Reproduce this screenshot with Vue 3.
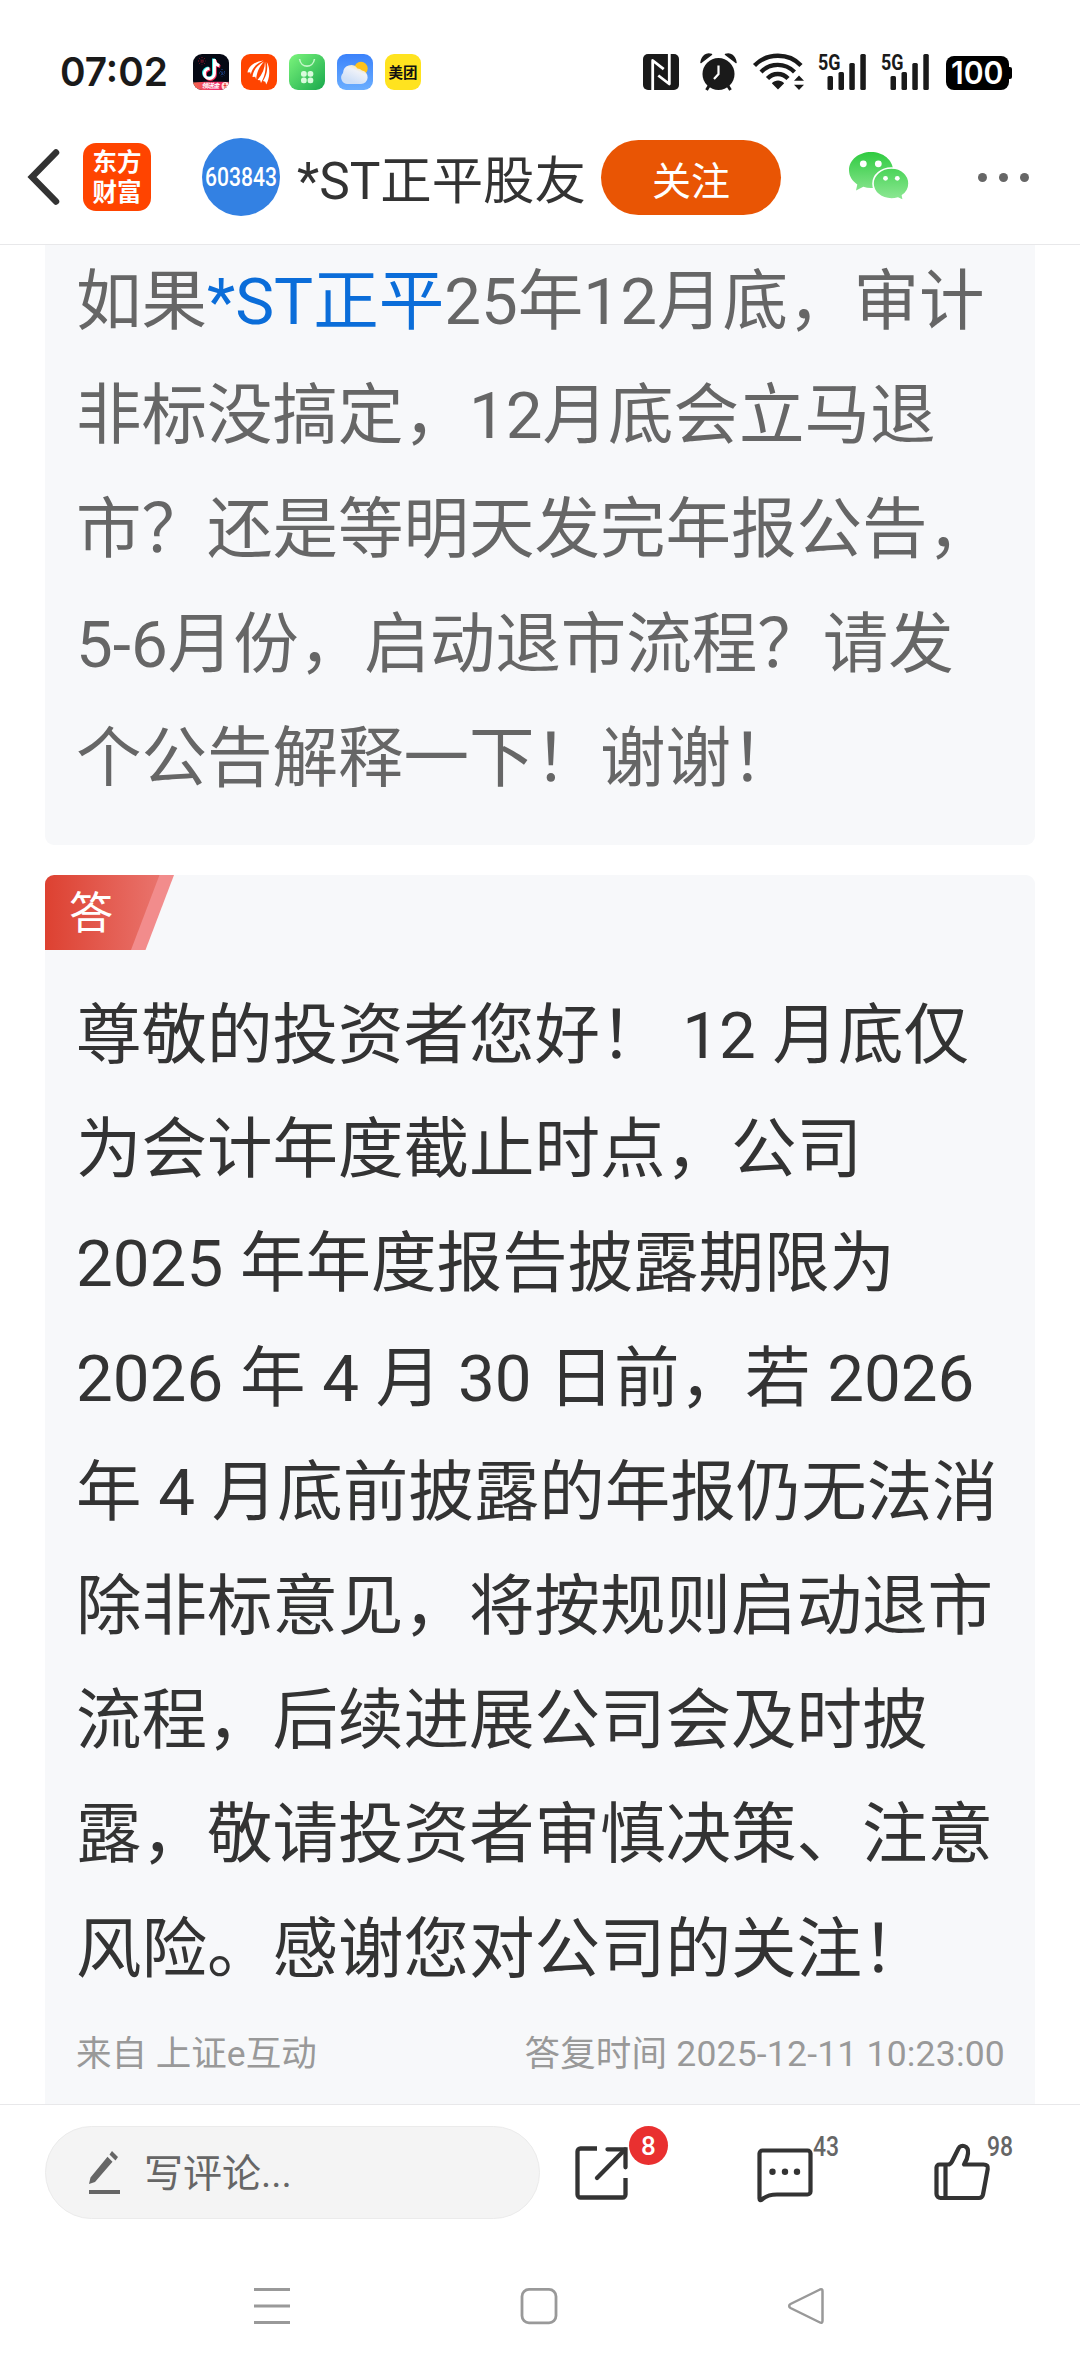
<template>
  <div class="page">
    <div class="status-bar">
      <svg class="clock" width="108" height="40" viewBox="0 0 108 40">
        <text x="0" y="34.5" textLength="108" lengthAdjust="spacingAndGlyphs">07:02</text>
      </svg>

      <div class="app-icons">
        <svg width="36" height="36" viewBox="0 0 36 36">
          <defs>
            <clipPath id="tile"><rect width="36" height="36" rx="9" /></clipPath>
            <linearGradient id="promo" x1="0" x2="1">
              <stop offset="0" stop-color="#f4694f" />
              <stop offset="0.6" stop-color="#ee2a6c" />
              <stop offset="1" stop-color="#f0355c" />
            </linearGradient>
          </defs>
          <g clip-path="url(#tile)">
            <rect width="36" height="36" fill="#060914" />
            <g fill="none" stroke-width="3">
              <path d="M20.500 4.500v14.500a5 5 0 1 1-5-5M20.500 5.500c.5 3.500 2.500 5 5 5.500" stroke="#25e8e4" />
              <path d="M22.300 6v14.500a5 5 0 1 1-5-5M22.300 7c.5 3.500 2.500 5 5 5.500" stroke="#f32b56" />
              <path d="M21.400 5v14.500a5 5 0 1 1-5-5M21.400 6c.5 3.500 2.500 5 5 5.500" stroke="#fff" />
            </g>
            <g stroke-width="1" stroke-dasharray="1 1.500">
              <path d="M5 7h8M9 3v8M6 4l6 6M12 4l-6 6" stroke="#8c1a2c" />
              <path d="M26 19h7M29 15v8M27 17l5 5M32 17l-5 5" stroke="#1f4b9c" />
            </g>
            <path d="M0 28.500c8-1 22-1 36-.5v8H0z" fill="url(#promo)" />
            <circle cx="32.500" cy="32" r="4" fill="#ffe3dc" />
            <path d="M32 29v5M30.500 31.500h3" stroke="#e8352f" />
            <text class="promo" x="8.500" y="34.200" textLength="18">领送金</text>
          </g>
        </svg>
        <svg width="36" height="36" viewBox="0 0 36 36">
          <rect width="36" height="36" rx="9" fill="#ff4400" />
          <g fill="#fff">
            <path d="M22.500 6.500C15 7.500 7.500 11 6.500 18.500l2.700-.2.600 2.200C11 14 15.500 9.500 22.500 6.500z" />
            <path d="M23 7.500C16.500 11 12 16 11.500 23l2.700-.3 1 2.800C15.500 18.500 18.500 12.500 23 7.500z" />
            <path d="M24 7.500C24 14 21.500 20 16.500 26l2.700.2.800 2.800C24 22 25.500 14.500 24 7.500z" />
            <path d="M25.800 8c1.200 7 0 13-3.800 19l2.300.7.900 2.800C29 24 29.500 14.500 25.800 8z" />
          </g>
        </svg>
        <svg width="36" height="36" viewBox="0 0 36 36">
          <defs>
            <linearGradient id="bag" x1="0" y1="0" x2="1" y2="1">
              <stop offset="0" stop-color="#7cf57c" />
              <stop offset="1" stop-color="#18a84c" />
            </linearGradient>
          </defs>
          <rect width="36" height="36" rx="9" fill="url(#bag)" />
          <path d="M10.500 5c1.500 9.500 13.500 9.500 15 0" fill="none" stroke="#c3f7c8" stroke-width="1.600" />
          <g fill="#d9fbdd">
            <rect x="12" y="17" width="5.700" height="5.700" rx="2.500" />
            <rect x="18.600" y="17" width="5.700" height="5.700" rx="2.500" />
            <rect x="12" y="23.600" width="5.700" height="5.700" rx="2.500" />
            <rect x="18.600" y="23.600" width="5.700" height="5.700" rx="2.500" />
          </g>
        </svg>
        <svg width="36" height="36" viewBox="0 0 36 36">
          <defs>
            <linearGradient id="sky" x1="0" y1="0" x2="0" y2="1">
              <stop offset="0" stop-color="#3b82fb" />
              <stop offset="1" stop-color="#6aaeff" />
            </linearGradient>
            <linearGradient id="cloud" x1="0.800" y1="0" x2="0.300" y2="0.800">
              <stop offset="0" stop-color="#ffe08a" />
              <stop offset="0.400" stop-color="#eef1f8" />
              <stop offset="1" stop-color="#cfe0f7" />
            </linearGradient>
          </defs>
          <rect width="36" height="36" rx="9" fill="url(#sky)" />
          <circle cx="24" cy="14.500" r="6.700" fill="#ffc21c" />
          <path d="M11 30a6.500 6.500 0 0 1-5-11 8 8 0 0 1 14.500-4.500 7 7 0 0 1 4.500 2A6.800 6.800 0 0 1 24 30z" fill="url(#cloud)" />
        </svg>
        <svg width="36" height="36" viewBox="0 0 36 36">
          <rect width="36" height="36" rx="9" fill="#ffe31f" />
          <text class="meituan" x="3.500" y="23.500" textLength="29">美团</text>
        </svg>
      </div>

      <div class="system-icons">
        <svg class="nfc" width="36" height="36" viewBox="0 0 36 36">
          <rect width="36" height="36" rx="5" fill="#1a1a1a" />
          <path d="M9.700 36V6.500l11 8.700M26.300 0v30l-11-8.500" fill="none" stroke="#fff" stroke-width="2.800" stroke-linejoin="round" />
        </svg>
        <svg class="alarm" width="38" height="38" viewBox="0 0 38 38" fill="#1a1a1a">
          <circle cx="18.500" cy="21" r="16" />
          <path d="M1 9.500C2 3 6.500-.5 11.500 1.500zM36 9.500C35 3 30.500-.5 25.500 1.500z" stroke="#1a1a1a" stroke-width="1.500" stroke-linejoin="round" />
          <path d="M9 33l-2.500 4M28 33l2.500 4" stroke="#1a1a1a" stroke-width="3" />
          <path d="M18.500 12.500v8.500l-4.500 5" fill="none" stroke="#fff" stroke-width="2.200" />
        </svg>
        <svg class="wifi" width="52" height="38" viewBox="0 0 52 38">
          <g fill="none" stroke="#1a1a1a" stroke-width="4.300">
            <path d="M1.500 12.500C14-.5 36-.5 48 12.500" />
            <path d="M8 19c9.500-9.500 24-9.500 33.500 0" />
            <path d="M14.500 25.500c5.500-6 15-6 20.500 0" />
          </g>
          <path d="M25 36.500l-6.200-6.300c3.500-3.600 9-3.600 12.400 0zM46 37l-5-5.300h10zM46 22.500l-5 5.300h10z" fill="#1a1a1a" />
        </svg>
        <svg v-for="n in 2" :key="n" class="signal" width="48" height="38" viewBox="0 0 48 38">
          <text x="0" y="16.500" textLength="22.500" lengthAdjust="spacingAndGlyphs">5G</text>
          <g fill="#1a1a1a">
            <rect x="9.500" y="23" width="5.500" height="14" rx="1.500" />
            <rect x="20.500" y="19" width="5.500" height="18" rx="1.500" />
            <rect x="31.300" y="10" width="5.500" height="27" rx="1.500" />
            <rect x="42.300" y="1" width="5.500" height="36" rx="1.500" />
          </g>
        </svg>
        <svg class="battery" width="67" height="34" viewBox="0 0 67 34">
          <rect width="63" height="34" rx="8" />
          <rect x="60" y="11" width="6" height="12" rx="2" />
          <text x="5" y="28" textLength="52.500" lengthAdjust="spacingAndGlyphs">100</text>
        </svg>
      </div>
    </div>

    <header class="header">
      <svg class="back" width="34" height="60" viewBox="0 0 34 60">
        <path d="M29 5.500L5 30l24 24.500" fill="none" stroke="#333" stroke-width="6.500" stroke-linecap="round" />
      </svg>
      <div class="brand">
        <span>东方</span>
        <span>财富</span>
      </div>
      <svg class="avatar" width="78" height="78" viewBox="0 0 78 78">
        <circle cx="39" cy="39" r="39" fill="#3381e3" />
        <text x="3" y="47.500" textLength="72" lengthAdjust="spacingAndGlyphs">603843</text>
      </svg>
      <div class="title">*ST正平股友</div>
      <button class="follow">关注</button>
      <svg class="wechat" width="62" height="50" viewBox="0 0 62 50">
        <defs>
          <linearGradient id="wx1" x1="0" y1="0" x2="0" y2="1">
            <stop offset="0" stop-color="#2fcb40" />
            <stop offset="1" stop-color="#84e38b" />
          </linearGradient>
          <linearGradient id="wx2" x1="0" y1="0" x2="0" y2="1">
            <stop offset="0" stop-color="#4ad458" />
            <stop offset="1" stop-color="#90e896" />
          </linearGradient>
        </defs>
        <path d="M22 0C9.800 0 0 8 0 18.300c0 5.700 3.200 10.700 8.300 14.100L7 38.500l7.300-3.700c2.500.8 5 1.200 7.700 1.200 12.200 0 22-7.800 22-17.800S34.200 0 22 0z" fill="url(#wx1)" />
        <path d="M42.500 16C32 16 24 23 24 31.500S32 47 42.500 47c2.300 0 4.500-.4 6.500-1l5.500 2.700-1-5.200c4-2.800 6.500-7.100 6.500-12C60 23 53 16 42.500 16z" fill="url(#wx2)" stroke="#fff" stroke-width="1.600" />
        <g fill="#fff">
          <circle cx="14.300" cy="11.800" r="3.400" />
          <circle cx="29.300" cy="11.800" r="3.400" />
          <circle cx="36.500" cy="26.300" r="2.400" />
          <circle cx="48.300" cy="26.300" r="2.400" />
        </g>
      </svg>
      <div class="more"><i></i><i></i><i></i></div>
    </header>

    <main class="content">
      <section class="card question">
        <p class="line">如果<a class="stock">*ST正平</a>25年12月底，审计</p>
        <p v-for="line in questionLines" :key="line" class="line">{{ line }}</p>
      </section>

      <section class="card answer">
        <svg class="tag" width="130" height="75" viewBox="0 0 130 75">
          <defs>
            <linearGradient id="tag" x1="0" x2="1">
              <stop offset="0" stop-color="#dd4131" />
              <stop offset="1" stop-color="#e9736c" />
            </linearGradient>
          </defs>
          <path d="M100 0h29l-28.500 75H80z" fill="#f28c8c" />
          <path d="M9 0h105.500L86 75H0V9a9 9 0 0 1 9-9z" fill="url(#tag)" />
          <text x="24" y="53.500">答</text>
        </svg>
        <div class="answer-text">
          <p v-for="line in answerLines" :key="line" class="line">{{ line }}</p>
        </div>
        <div class="meta">
          <span>来自 上证e互动</span>
          <span class="reply-time">答复时间 2025-12-11 10:23:00</span>
        </div>
      </section>
    </main>

    <footer class="toolbar">
      <div class="comment-box">
        <svg width="34" height="46" viewBox="0 0 34 46" fill="#666">
          <path d="M1 34l1.500-6.500L19.500 6.700l5 5L7 32zM21.500 4.500L24 1l6 6-2.500 3.500zM1 40h31v4H1z" />
        </svg>
        <span>写评论...</span>
      </div>
      <div class="action share">
        <svg width="54" height="54" viewBox="0 0 54 54" fill="none" stroke="#333" stroke-width="4.300">
          <path d="M22 2.500H5.500a3 3 0 0 0-3 3v43a3 3 0 0 0 3 3h42a3 3 0 0 0 3-3V32" />
          <path d="M32.500 3.300h18v18" stroke-linecap="round" />
          <path d="M50 3.500L22 32" stroke-linecap="round" />
        </svg>
        <span class="badge">8</span>
      </div>
      <div class="action comments">
        <svg width="56" height="56" viewBox="0 0 56 56">
          <path d="M5.500 2.500h45a3 3 0 0 1 3 3v38a3 3 0 0 1-3 3H20c-7 0-11 1.500-15 5-1.500 1.200-2.500.6-2.500-1V5.500a3 3 0 0 1 3-3z" fill="none" stroke="#333" stroke-width="4.200" />
          <g fill="#333">
            <circle cx="15.500" cy="23.800" r="3.200" />
            <circle cx="28" cy="23.800" r="3.200" />
            <circle cx="40" cy="23.800" r="3.200" />
          </g>
        </svg>
        <span class="count">43</span>
      </div>
      <div class="action likes">
        <svg width="57" height="58" viewBox="0 0 57 58" fill="none" stroke="#333" stroke-width="4.200" stroke-linejoin="round">
          <path d="M5.500 21.500H14c2 0 3-1 4-3L24.500 5.500c2-4.500 10.500-3.500 9.500 5-.3 4.500-2 8-4 11h19.500c3.500 0 4.700 1.500 4.200 4.500L49 51.500c-.6 2.500-1.500 3.500-4 3.500H6.500a4 4 0 0 1-4-4V24.500a3 3 0 0 1 3-3z" />
          <path d="M11.500 21.500V55" />
        </svg>
        <span class="count">98</span>
      </div>
    </footer>

    <nav class="system-nav">
      <svg width="38" height="38" viewBox="0 0 38 38" fill="none" stroke="#999" stroke-width="2.800">
        <path d="M1 2.500h36M1 19h36M1 35.500h36" />
      </svg>
      <svg width="38" height="38" viewBox="0 0 38 38" fill="none" stroke="#999" stroke-width="2.800">
        <rect x="2" y="2.400" width="34" height="33.400" rx="7" />
      </svg>
      <svg width="38" height="38" viewBox="0 0 38 38" fill="none" stroke="#999" stroke-width="2.500">
        <path d="M33 2.500L3.500 17c-1.800 1-1.800 3 0 4L33 35.500c1.500.7 2.500 0 2.500-1.500V4c0-1.500-1-2.200-2.500-1.500z" />
      </svg>
    </nav>
  </div>
</template>

<script setup>
const questionLines = [
  '非标没搞定，12月底会立马退',
  '市？还是等明天发完年报公告，',
  '5-6月份，启动退市流程？请发',
  '个公告解释一下！谢谢！',
]

const answerLines = [
  '尊敬的投资者您好！ 12 月底仅',
  '为会计年度截止时点，公司',
  '2025 年年度报告披露期限为',
  '2026 年 4 月 30 日前，若 2026',
  '年 4 月底前披露的年报仍无法消',
  '除非标意见，将按规则启动退市',
  '流程，后续进展公司会及时披',
  '露，敬请投资者审慎决策、注意',
  '风险。感谢您对公司的关注！',
]
</script>

<style>
body {
  margin: 0;
  background: #fff;
}
</style>

<style scoped>
.page {
  width: 1080px;
  height: 2372px;
  overflow: hidden;
  display: flex;
  flex-direction: column;
  background: #fff;
  color: #333;
  font-family: Roboto, "Noto Sans CJK SC", sans-serif;
  text-spacing-trim: space-all;
}

svg {
  display: block;
  flex: none;
  overflow: visible;
}

/* status bar */
.status-bar {
  box-sizing: border-box;
  height: 120px;
  padding: 51px 67px 0 60px;
  display: flex;
  align-items: flex-start;
}

.clock text {
  font: 600 40px Inter, sans-serif;
  fill: #1a1a1a;
}

.app-icons {
  display: flex;
  gap: 12px;
  margin: 3px 0 0 25px;
}

.promo {
  font: italic 700 6.500px "Noto Sans CJK SC", sans-serif;
  fill: #fff;
}

.meituan {
  font: 700 14.500px "Noto Sans CJK SC", sans-serif;
  fill: #111;
}

.system-icons {
  display: flex;
  margin-left: auto;
}

.nfc {
  margin-top: 3px;
}

.alarm {
  margin: 2px 0 0 21px;
}

.wifi {
  margin: 2px 0 0 15px;
}

.signal {
  margin: 2px 0 0 13px;
}

.signal + .signal {
  margin-left: 15px;
}

.signal text {
  font: 700 22px Roboto, sans-serif;
  fill: #1a1a1a;
}

.battery {
  margin: 5px 0 0 17px;
}

.battery text {
  font: 600 31px Inter, sans-serif;
  fill: #fff;
}

/* header */
.header {
  box-sizing: border-box;
  height: 125px;
  padding: 0 51px 10px 27px;
  display: flex;
  align-items: center;
  border-bottom: 1px solid #e8e8ea;
}

.brand {
  box-sizing: border-box;
  width: 68px;
  height: 68px;
  margin-left: 22px;
  padding-bottom: 3px;
  border-radius: 13px;
  background: #ff4400;
  color: #fff;
  display: flex;
  flex-direction: column;
  align-items: center;
  justify-content: center;
  font: 700 24.500px/30px "Noto Sans CJK SC", sans-serif;
}

.avatar {
  margin-left: 51px;
}

.avatar text {
  font: 500 26px Roboto, sans-serif;
  fill: #fff;
}

.title {
  width: 304px;
  margin-left: 17px;
  padding-top: 9px;
  box-sizing: border-box;
  font-size: 51.400px;
  line-height: 60px;
  white-space: nowrap;
}

.follow {
  width: 180px;
  height: 75px;
  padding: 1px 0 0;
  border: 0;
  border-radius: 38px;
  background: #e95504;
  color: #fff;
  font-family: inherit;
  font-size: 39px;
}

.wechat {
  margin-left: 68px;
}

.more {
  display: flex;
  gap: 12px;
  margin-left: auto;
}

.more i {
  width: 9px;
  height: 9px;
  border-radius: 50%;
  background: #666;
}

/* question and answer */
.content {
  height: 1859px;
  padding: 0 45px;
  overflow: hidden;
}

.card {
  box-sizing: border-box;
  background: #f7f8fa;
}

.question {
  height: 600px;
  padding: 0 31px;
  border-radius: 0 0 9px 9px;
  color: #666;
}

.line {
  margin: 0;
  font-size: 65.500px;
  line-height: 114.200px;
  word-spacing: 0.500px;
  white-space: pre;
}

.stock {
  color: #0b6dd9;
}

.answer {
  height: 1240px;
  margin-top: 30px;
  border-radius: 9px 9px 0 0;
}

.tag text {
  font: 400 44px "Noto Sans CJK SC", sans-serif;
  fill: #fff;
}

.answer-text {
  padding: 29px 31px 0;
}

.meta {
  display: flex;
  justify-content: space-between;
  padding: 22px 30px 0 31px;
  color: #999;
  font-size: 35.500px;
  line-height: 50px;
  white-space: nowrap;
}

.reply-time {
  letter-spacing: 0.200px;
}

/* bottom toolbar */
.toolbar {
  box-sizing: border-box;
  height: 136px;
  padding: 21px 0 0 45px;
  display: flex;
  align-items: flex-start;
  border-top: 1px solid #e8e8ea;
}

.comment-box {
  box-sizing: border-box;
  width: 495px;
  height: 93px;
  padding: 0 0 0 42px;
  display: flex;
  align-items: center;
  gap: 22px;
  border: 1px solid #ebebeb;
  border-radius: 47px;
  background: #f4f4f4;
  color: #666;
  font-size: 39px;
}

.comment-box span {
  padding-bottom: 5px;
}

.action {
  position: relative;
}

.share {
  margin: 20px 0 0 35px;
}

.comments {
  margin: 22px 0 0 128px;
}

.likes {
  margin: 17px 0 0 121px;
}

.badge {
  position: absolute;
  left: 54px;
  top: -20px;
  width: 39px;
  height: 39px;
  border-radius: 50%;
  background: #e93030;
  color: #fff;
  font: 500 26px/40px Roboto, sans-serif;
  text-align: center;
}

.count {
  position: absolute;
  left: 56px;
  top: -16px;
  color: #666;
  font-size: 27px;
  font-weight: 500;
  line-height: 30px;
  transform: scaleX(0.850);
  transform-origin: 0 0;
}

.likes .count {
  left: 53px;
  top: -11px;
}

/* system navigation */
.system-nav {
  display: flex;
  gap: 229px;
  padding: 47px 0 0 253px;
}
</style>
